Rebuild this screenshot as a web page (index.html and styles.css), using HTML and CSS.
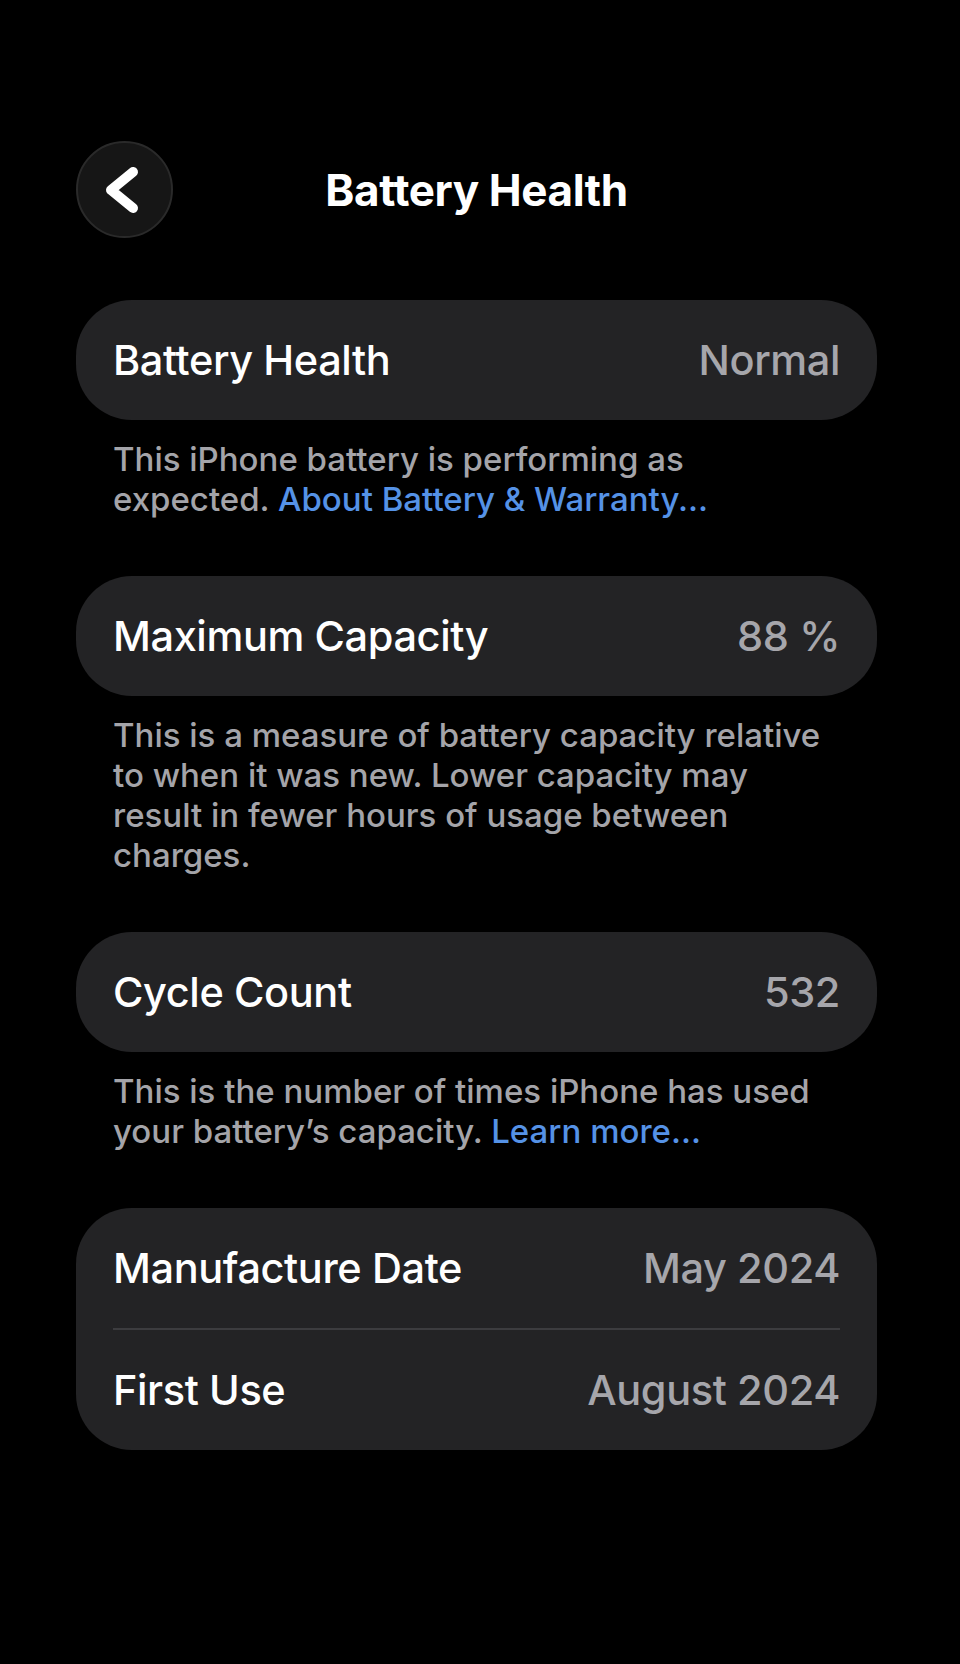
FILE: index.html
```html
<!DOCTYPE html>
<html lang="en">
<head>
    <meta charset="UTF-8">
    <meta name="viewport" content="width=device-width, initial-scale=1.0">
    <title>Battery Health</title>
    <link rel="stylesheet" href="styles.css">
</head>
<body>
    <div id="page">
        <div id="nav">
            <button class="back-btn" aria-label="Back">
                <svg viewBox="0 0 97 97" width="97" height="97">
                    <path d="M57 31 L35 49 L57 67" fill="none" stroke="#fff" stroke-width="10" stroke-linecap="round" stroke-linejoin="round"/>
                </svg>
            </button>
            <h1 class="nav-title">Battery Health</h1>
            <div></div>
        </div>

        <div class="group">
            <div class="row">
                <span class="label">Battery Health</span>
                <span class="value">Normal</span>
            </div>
        </div>
        <p class="footer">This iPhone battery is performing as expected. <a href="#">About Battery &amp; Warranty...</a></p>

        <div class="group">
            <div class="row">
                <span class="label">Maximum Capacity</span>
                <span class="value">88 %</span>
            </div>
        </div>
        <p class="footer">This is a measure of battery capacity relative to when it was new. Lower capacity may result in fewer hours of usage between charges.</p>

        <div class="group">
            <div class="row">
                <span class="label">Cycle Count</span>
                <span class="value">532</span>
            </div>
        </div>
        <p class="footer">This is the number of times iPhone has used your battery’s capacity. <a href="#">Learn more...</a></p>

        <div class="group">
            <div class="row">
                <span class="label">Manufacture Date</span>
                <span class="value">May 2024</span>
            </div>
            <div class="divider"></div>
            <div class="row">
                <span class="label">First Use</span>
                <span class="value">August 2024</span>
            </div>
        </div>
    </div>
</body>
</html>
```

FILE: styles.css
```css
* {
    margin: 0;
    padding: 0;
    box-sizing: border-box;
}

body {
    font-family: Inter, 'Liberation Sans', sans-serif;
    background: #000;
    color: #fff;
    min-height: 100vh;
}

#page {
    padding: 141px 83px 0 76px;
}

#nav {
    display: grid;
    grid-template-columns: 1fr auto 1fr;
    align-items: center;
    height: 97px;
    margin-bottom: 62px;
}

.back-btn {
    width: 97px;
    height: 97px;
    border-radius: 50%;
    background: #161616;
    border: 2px solid #2a2a2a;
    display: flex;
    align-items: center;
    justify-content: center;
    cursor: pointer;
}

.back-btn svg {
    display: block;
    flex: none;
}

.nav-title {
    font-size: 44px;
    font-weight: 700;
    letter-spacing: -0.4px;
}

.group {
    background: #232325;
    border-radius: 56px;
    padding: 0 37px;
}

.row {
    height: 120px;
    display: flex;
    align-items: center;
    justify-content: space-between;
    font-size: 41.5px;
    font-weight: 500;
    letter-spacing: -0.4px;
}

.value {
    color: #a6a6ab;
}

.divider {
    height: 2px;
    background: #3c3c3f;
}

.footer {
    padding: 19px 50px 0 37px;
    margin-bottom: 57px;
    font-size: 33px;
    font-weight: 500;
    line-height: 40px;
    color: #a4a4a9;
}

.footer a {
    color: #5592e6;
    text-decoration: none;
}
```
